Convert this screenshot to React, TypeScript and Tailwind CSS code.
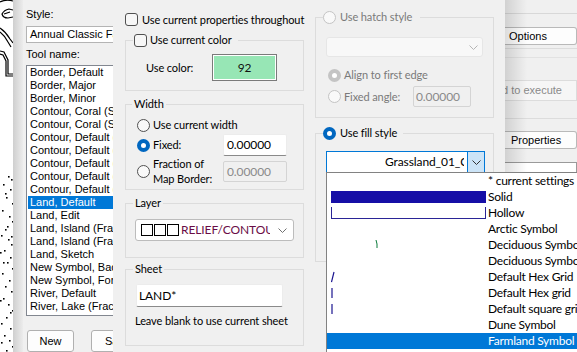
import React from "react";

function Checkbox() {
  return <span className="inline-block w-[13px] h-[13px] rounded-[3px] border border-[#505050] bg-[#f7f7f7] shrink-0" />;
}

function Radio({ checked = false, disabled = false }: { checked?: boolean; disabled?: boolean }) {
  if (checked && !disabled)
    return <span className="inline-block w-[13px] h-[13px] rounded-full shrink-0 border-[4px] border-[#0067c0] bg-white" />;
  if (checked && disabled)
    return <span className="inline-block w-[13px] h-[13px] rounded-full shrink-0 border-[4px] border-[#c4c4c4] bg-white" />;
  if (disabled)
    return <span className="inline-block w-[13px] h-[13px] rounded-full shrink-0 border border-[#c4c4c4] bg-[#f9f9f9]" />;
  return <span className="inline-block w-[13px] h-[13px] rounded-full shrink-0 border border-[#505050] bg-[#f9f9f9]" />;
}

function Chevron({ color = "#606060" }: { color?: string }) {
  return (
    <svg width="9" height="5" viewBox="0 0 9 5" className="shrink-0">
      <polyline points="0.5,0.5 4.5,4.5 8.5,0.5" fill="none" stroke={color} strokeWidth="1" />
    </svg>
  );
}

const dots: [number, number][] = [
  [8, 176], [11, 179], [3, 184], [10, 189], [6, 197], [12, 203], [2, 210], [9, 216], [12, 221], [5, 229],
  [1, 235], [8, 239], [11, 244], [4, 250], [10, 257], [7, 262], [12, 268], [2, 273], [9, 280], [5, 286],
  [11, 291], [3, 298], [8, 304], [12, 310], [6, 317], [1, 323], [10, 328], [4, 335], [9, 340], [12, 346],
  [6, 350], [3, 262], [0, 300], [7, 226], [10, 312], [1, 342], [11, 236], [5, 193], [0, 252],
];

const listItems = [
  "Border, Default",
  "Border, Major",
  "Border, Minor",
  "Contour, Coral (Sea)",
  "Contour, Coral (Sea)",
  "Contour, Default (1)",
  "Contour, Default (2)",
  "Contour, Default (3)",
  "Contour, Default (4)",
  "Contour, Default (5)",
  "Land, Default",
  "Land, Edit",
  "Land, Island (Fractal)",
  "Land, Island (Fractal)",
  "Land, Sketch",
  "New Symbol, Background",
  "New Symbol, Foreground",
  "River, Default",
  "River, Lake (Fractal)",
  "River, Lake (Sketch)",
];

function Swatch({ kind }: { kind: string }) {
  if (kind === "solid") return <div className="w-[155px] h-[12px] bg-[#160ea6]" />;
  if (kind === "hollow")
    return <div className="w-[155px] h-[12px] border-l border-r border-b border-[#2a2496]" />;
  if (kind === "green")
    return (
      <svg width="155" height="16" viewBox="0 0 155 16">
        <path d="M45 3 L46 7 L46 11" stroke="#0a7a3a" strokeWidth="1" fill="none" />
      </svg>
    );
  if (kind === "slash")
    return (
      <svg width="155" height="16" viewBox="0 0 155 16">
        <path d="M3 3 L0.5 13" stroke="#1a148f" strokeWidth="1.2" fill="none" />
      </svg>
    );
  if (kind === "bar")
    return (
      <svg width="155" height="16" viewBox="0 0 155 16">
        <path d="M1 3 L1 13" stroke="#1a148f" strokeWidth="1.2" fill="none" />
      </svg>
    );
  return <div className="w-[155px] h-[12px]" />;
}

const fillItems: { t: string; k: string }[] = [
  { t: "* current settings", k: "" },
  { t: "Solid", k: "solid" },
  { t: "Hollow", k: "hollow" },
  { t: "Arctic Symbol", k: "" },
  { t: "Deciduous Symbol", k: "green" },
  { t: "Deciduous Symbol", k: "" },
  { t: "Default Hex Grid", k: "slash" },
  { t: "Default Hex grid", k: "bar" },
  { t: "Default square grid", k: "bar" },
  { t: "Dune Symbol", k: "" },
];

export default function App() {
  return (
    <div className="relative w-[577px] h-[352px] overflow-hidden bg-[#f0f0f0]">
      {/* map canvas */}
      <svg width="13" height="352" viewBox="0 0 13 352" className="absolute left-0 top-0 bg-white">
        <g stroke="#000" strokeWidth="1.2" fill="none">
          <path d="M0 2 Q6 -1 13 1" />
          <path d="M13 10 L9 9 Q4 10 2 14 Q3 18 8 18 L13 17" />
          <path d="M4 14 L10 12" />
          <path d="M0 28 Q6 32 10 39 L13 43" />
          <path d="M0 32 Q5 36 8 42 L11 47" />
          <path d="M0 51 L4 52 L8 60 L8 74 L13 74" />
          <path d="M0 54 L3 55 L6 61 L6 76 L13 76" />
        </g>
        {dots.map(([x, y], i) => (
          <rect key={i} x={x} y={y} width="1.6" height="1.6" fill="#000" />
        ))}
      </svg>
      <div className="absolute left-[13px] top-0 w-[10px] h-full bg-linear-to-r from-[#cfcfcf] to-[#ececec]" />

      {/* back window */}
      <div className="absolute left-[23px] top-0 right-0 h-full bg-[#f0f0f0] font-['Liberation_Sans',Arial,sans-serif] text-[11px] text-black flex">
        <div className="pl-[3px] w-[110px] shrink-0 flex flex-col">
          <div className="pt-[8px] leading-[13px]">Style:</div>
          <div className="mt-[5px] h-[17px] bg-white border border-[#b4b4b4] pl-[3px] leading-[15px] whitespace-nowrap overflow-hidden">
            Annual Classic Fantasy
          </div>
          <div className="mt-[5px] leading-[13px]">Tool name:</div>
          <div className="mt-[4px] h-[254px] w-[100px] bg-white border border-[#828790] px-[1px] overflow-hidden">
            {listItems.map((t, i) => (
              <div
                key={i}
                className={
                  i === 10
                    ? "h-[13px] leading-[13px] pl-[2px] whitespace-nowrap bg-[#0078d7] text-white"
                    : "h-[13px] leading-[13px] pl-[2px] whitespace-nowrap"
                }
              >
                {t}
              </div>
            ))}
          </div>
          <div className="mt-[14px] flex gap-[17px] pl-[1px]">
            <div className="w-[47px] h-[22px] rounded-[3px] border border-[#b0b0b0] bg-[#fdfdfd] flex items-center justify-center shrink-0">
              New
            </div>
            <div className="w-[60px] h-[22px] rounded-[3px] border border-[#b0b0b0] bg-[#fdfdfd] flex items-center pl-[13px] shrink-0">
              Save
            </div>
          </div>
        </div>
        <div className="ml-auto w-[72px] shrink-0 flex flex-col">
          <div className="h-[14px] border-b border-[#d8d8d8]" />
          <div className="mt-[13px] h-[18px] bg-[#fdfdfd] border border-l-0 border-[#b9b9b9] rounded-r-[3px] pl-[4px] leading-[16px] whitespace-nowrap">
            Options
          </div>
          <div className="mt-[3px] border-b border-[#dcdcdc]" />
          <div className="mt-[8px] border-b border-[#e2e2e2]" />
          <div className="mt-[22px] h-[21px] bg-[#f6f6f6] border border-l-0 border-[#dcdcdc] leading-[19px] text-[#8a8a8a] whitespace-nowrap overflow-hidden">
            <span className="-ml-[3px]">d to execute</span>
          </div>
          <div className="mt-[17px] border-b border-[#dcdcdc]" />
          <div className="mt-[12px] h-[18px] bg-[#fdfdfd] border border-l-0 border-[#b9b9b9] rounded-r-[3px] pl-[6px] leading-[16px] whitespace-nowrap">
            Properties
          </div>
          <div className="mt-[13px] h-[11px] bg-white border border-l-0 border-[#9a9a9a]" />
        </div>
      </div>

      {/* dialog shadow */}
      <div className="absolute left-[505px] top-0 w-[22px] h-full bg-linear-to-r from-[rgba(0,0,0,0.13)] to-transparent" />

      {/* main dialog */}
      <div className="absolute left-[113px] top-0 w-[392px] h-full bg-[#f0f0f0] font-['Lato',sans-serif] text-[11px] tracking-[-0.1px] leading-[14px] text-black">
        <div className="flex gap-[11px] pl-[12px]">
          {/* left column */}
          <div className="w-[179px] shrink-0 flex flex-col pt-[13px]">
            <div className="flex items-center gap-[4px] h-[13px] whitespace-nowrap">
              <Checkbox />
              Use current properties throughout
            </div>
            <fieldset className="mt-[7px] border border-[#dcdcdc] min-w-0">
              <legend className="ml-[7px] pl-[1px] pr-[6px] flex items-center gap-[3px] h-[14px] whitespace-nowrap">
                <Checkbox />
                Use current color
              </legend>
              <div className="flex items-center pt-[7px] pb-[9px] pl-[20px]">
                <span className="w-[66px] whitespace-nowrap">Use color:</span>
                <div className="w-[65px] h-[27px] border border-[#7a7a7a] p-[1px] bg-white">
                  <div className="w-full h-full bg-[#97e6b5] flex items-center justify-center text-[12px] text-[#111]">92</div>
                </div>
              </div>
            </fieldset>

            <fieldset className="mt-[6px] border border-[#dcdcdc] min-w-0">
              <legend className="ml-[6px] px-[2px] h-[14px] leading-[14px]">Width</legend>
              <div className="flex flex-col pl-[11px] pt-[7px] pb-[3px]">
                <div className="flex items-center gap-[3px] h-[14px] whitespace-nowrap">
                  <Radio />
                  Use current width
                </div>
                <div className="flex items-center mt-[2px] h-[22px]">
                  <Radio checked />
                  <span className="ml-[3px] w-[70px]">Fixed:</span>
                  <div className="w-[64px] h-[22px] bg-white border border-[#ececec] border-b-[#8a8a8a] rounded-[2px] pl-[3px] leading-[20px] text-[12px]">
                    0.00000
                  </div>
                </div>
                <div className="flex items-center h-[30px]">
                  <Radio />
                  <span className="ml-[3px] w-[70px] leading-[15px] whitespace-nowrap">
                    Fraction of
                    <br />
                    Map Border:
                  </span>
                  <div className="w-[64px] h-[21px] bg-[#f0f0f0] border border-[#d4d4d4] rounded-[2px] pl-[3px] leading-[19px] text-[12px] text-[#8a8a8a]">
                    0.00000
                  </div>
                </div>
              </div>
            </fieldset>

            <fieldset className="mt-[6px] border border-[#dcdcdc] min-w-0">
              <legend className="ml-[7px] px-[2px] h-[14px] leading-[14px]">Layer</legend>
              <div className="pl-[9px] pt-[9px] pb-[16px]">
                <div className="w-[159px] h-[22px] bg-white border border-[#bcbcbc] rounded-[3px] flex items-center pl-[5px] pr-[6px]">
                  <span className="flex gap-[1px] shrink-0">
                    <span className="w-[12px] h-[12px] border border-black" />
                    <span className="w-[12px] h-[12px] border border-black" />
                    <span className="w-[12px] h-[12px] border border-black" />
                  </span>
                  <span className="ml-[2px] w-[89px] overflow-hidden whitespace-nowrap text-[12px] text-[#6a0c46]">RELIEF/CONTOURS</span>
                  <span className="ml-auto">
                    <Chevron color="#707070" />
                  </span>
                </div>
              </div>
            </fieldset>

            <fieldset className="mt-[4px] border border-[#dcdcdc] min-w-0">
              <legend className="ml-[7px] px-[2px] h-[14px] leading-[14px]">Sheet</legend>
              <div className="pl-[10px] pt-[8px] pb-[17px]">
                <div className="w-[147px] h-[23px] bg-white border border-[#ececec] border-b-[#8a8a8a] rounded-[2px] pl-[2px] leading-[21px] text-[12px]">
                  LAND*
                </div>
                <div className="mt-[6px] -ml-[1px] leading-[15px] whitespace-nowrap">Leave blank to use current sheet</div>
              </div>
            </fieldset>
          </div>

          {/* right column */}
          <div className="w-[179px] shrink-0 flex flex-col pt-[10px]">
            <fieldset className="border border-[#dcdcdc] min-w-0">
              <legend className="ml-[7px] pr-[8px] flex items-center gap-[4px] h-[14px] text-[#7a7a7a] whitespace-nowrap">
                <Radio disabled />
                Use hatch style
              </legend>
              <div className="pl-[10px] pt-[13px] pb-[10px] flex flex-col">
                <div className="w-[157px] h-[20px] bg-[#f8f8f8] border border-[#e6e6e6] rounded-[3px] flex items-center justify-end pr-[4px]">
                  <Chevron color="#b5b5b5" />
                </div>
                <div className="ml-[2px] mt-[11px] h-[14px] flex items-center gap-[3px] text-[#7a7a7a] whitespace-nowrap">
                  <Radio checked disabled />
                  Align to first edge
                </div>
                <div className="ml-[2px] mt-[4px] h-[21px] flex items-center text-[#7a7a7a]">
                  <Radio disabled />
                  <span className="ml-[3px] w-[69px] whitespace-nowrap">Fixed angle:</span>
                  <div className="w-[58px] h-[21px] bg-[#f0f0f0] border border-[#d4d4d4] rounded-[2px] pl-[2px] leading-[19px] text-[12px] text-[#8a8a8a]">
                    0.00000
                  </div>
                </div>
              </div>
            </fieldset>

            <fieldset className="mt-[8px] border border-[#dcdcdc] min-w-0">
              <legend className="ml-[7px] pr-[6px] flex items-center gap-[4px] h-[14px] whitespace-nowrap">
                <Radio checked />
                Use fill style
              </legend>
              <div className="pl-[10px] pt-[11px] pb-[88px]">
                <div className="w-[159px] h-[22px] bg-white border border-[#0078d7] flex">
                  <div className="w-[58px] shrink-0" />
                  <div className="w-[79px] overflow-hidden whitespace-nowrap leading-[20px] text-[12px]">Grassland_01_Color</div>
                  <div className="ml-auto w-[17px] bg-[#cce4f7] border-l border-[#0078d7] flex items-center justify-center">
                    <Chevron color="#333" />
                  </div>
                </div>
              </div>
            </fieldset>
          </div>
        </div>
      </div>

      {/* open dropdown list */}
      <div className="absolute left-[326px] top-[172px] w-[280px] h-[190px] bg-white border border-[#828282] font-['Lato',sans-serif] text-[12px] tracking-[-0.25px] text-black">
        {fillItems.map((it, i) => (
          <div key={i} className="h-[16px] flex items-center whitespace-nowrap">
            <div className="w-[155px] ml-[4px] h-[16px] flex items-center shrink-0">
              <Swatch kind={it.k} />
            </div>
            <span className="ml-[2px] leading-[16px]">{it.t}</span>
          </div>
        ))}
        <div className="h-[16px] flex items-center whitespace-nowrap bg-[#0078d7] text-white">
          <div className="w-[155px] ml-[4px] shrink-0" />
          <span className="ml-[2px] leading-[16px]">Farmland Symbol</span>
        </div>
      </div>
    </div>
  );
}
